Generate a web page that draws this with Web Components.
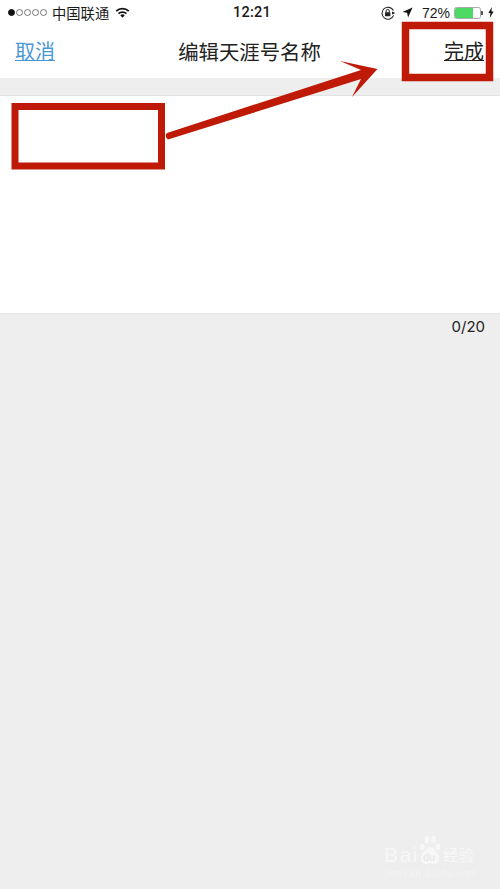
<!DOCTYPE html>
<html lang="zh">
<head>
<meta charset="utf-8">
<title>编辑天涯号名称</title>
<style>
  html, body { margin: 0; height: 100%; }
  body { width: 500px; height: 889px; overflow: hidden; background: #eee; color: #111; font-family: "Liberation Sans", "Noto Sans CJK SC", sans-serif; }
</style>
</head>
<body>
<app-page>
  <status-bar></status-bar>
  <nav-bar heading="编辑天涯号名称" cancel="取消" done="完成"></nav-bar>
  <edit-panel count="0/20"></edit-panel>
  <note-layer></note-layer>
  <baidu-mark></baidu-mark>
</app-page>
<script>
class AppPage extends HTMLElement {
  constructor() {
    super();
    this._shadowRoot = this.attachShadow({ mode: "open" });
  }
  connectedCallback() {
    this._shadowRoot.innerHTML = `
    <style>
      :host { display: flex; flex-direction: column; width: 500px; height: 889px; position: relative; overflow: hidden; }
    </style>
    <slot></slot>
    `;
  }
}

class StatusBar extends HTMLElement {
  constructor() {
    super();
    this._shadowRoot = this.attachShadow({ mode: "open" });
  }
  connectedCallback() {
    this._shadowRoot.innerHTML = `
    <style>
      :host { display: grid; grid-template-columns: 1fr auto 1fr; align-items: center; height: 25px; background: #fff; font-size: 14px; color: #1a1a1a; }
      .left { display: flex; align-items: center; padding-left: 8px; }
      .dots { display: flex; gap: 1px; margin-right: 5px; }
      .dots i { width: 7px; height: 7px; border: 1px solid #777; border-radius: 50%; box-sizing: border-box; }
      .dots i.on { background: #111; border-color: #111; }
      .carrier { font-size: 14.3px; margin-right: 6px; }
      .time { font-family: Roboto, "Liberation Sans", sans-serif; font-weight: 500; font-size: 14.5px; letter-spacing: .2px; margin-left: 4px; }
      .right { display: flex; align-items: center; justify-content: flex-end; padding-right: 6px; }
      svg { display: block; }
      .arrow { margin-left: 6px; }
      .pct { font-size: 14px; margin: 0 4px 0 9px; }
      .battery { width: 27px; height: 12px; border: 1px solid #aaa; border-radius: 2.5px; box-sizing: border-box; background: #fff; overflow: hidden; }
      .battery b { display: block; width: 72%; height: 100%; background: #4cd964; }
      .cap { width: 2px; height: 4px; background: #555; border-radius: 0 1px 1px 0; margin-right: 5px; }
    </style>
    <div class="left">
      <span class="dots"><i class="on"></i><i></i><i></i><i></i><i></i></span>
      <span class="carrier">中国联通</span>
      <svg width="15" height="11" viewBox="0 0 16 12"><path d="M0.5 3.8a11 11 0 0 1 15 0l-1.3 1.4a9 9 0 0 0-12.4 0z M3 6.500a7.400 7.400 0 0 1 10 0l-1.300 1.400a5.400 5.400 0 0 0-7.400 0z M5.600 9a3.500 3.500 0 0 1 4.800 0L8 11.600z" fill="#111"/></svg>
    </div>
    <div class="time">12:21</div>
    <div class="right">
      <svg width="15" height="14" viewBox="0 0 15 14"><path d="M12.400 4.600A6 6 0 1 0 12.600 9.400" fill="none" stroke="#222" stroke-width="1.100"/><rect x="4" y="6.300" width="5.400" height="4" rx=".6" fill="#222"/><path d="M5.100 6.500V5a1.600 1.600 0 0 1 3.200 0v1.500" fill="none" stroke="#222" stroke-width="1"/><path d="M11 5.500l3.400 1.500L11 8.500z" fill="#222"/></svg>
      <svg class="arrow" width="11" height="11" viewBox="0 0 12 12"><path d="M11.500 .5L6.600 11.500 5.600 6.400 .5 5.400z" fill="#111"/></svg>
      <span class="pct">72%</span>
      <span class="battery"><b></b></span><span class="cap"></span>
      <svg width="6" height="11" viewBox="0 0 7 13"><path d="M4.600 0L0.400 7.200h2.500L2 13l4.600-7.600H4z" fill="#111"/></svg>
    </div>
    `;
  }
}

class NavBar extends HTMLElement {
  constructor() {
    super();
    this._shadowRoot = this.attachShadow({ mode: "open" });
  }
  connectedCallback() {
    this._shadowRoot.innerHTML = `
    <style>
      :host { display: grid; grid-template-columns: 1fr auto 1fr; align-items: center; height: 53px; box-sizing: border-box; padding: 0 16px 2px 15px; background: #fff; font-size: 20px; }
      .cancel, .done { text-decoration: underline; text-decoration-thickness: 1px; text-underline-offset: 1px; text-decoration-skip-ink: none; }
      .cancel { color: #4a97d8; justify-self: start; }
      .title { color: #222; font-size: 20.4px; }
      .done { color: #222; justify-self: end; }
    </style>
    <span class="cancel">${this.getAttribute("cancel")}</span>
    <span class="title">${this.getAttribute("heading")}</span>
    <span class="done">${this.getAttribute("done")}</span>
    `;
  }
}

class EditPanel extends HTMLElement {
  constructor() {
    super();
    this._shadowRoot = this.attachShadow({ mode: "open" });
  }
  connectedCallback() {
    this._shadowRoot.innerHTML = `
    <style>
      :host { display: flex; flex-direction: column; flex: 1; background: #eee; }
      .gap { height: 17px; border-bottom: 1px solid #e2e2e2; }
      .field { height: 218px; background: #fff; border-bottom: 1px solid #e8e8e8; box-sizing: border-box; }
      .count { padding: 3px 15px 0 0; text-align: right; font-family: Inter, "Liberation Sans", sans-serif; font-size: 15px; color: #222; }
    </style>
    <div class="gap"></div>
    <div class="field"></div>
    <div class="count">${this.getAttribute("count")}</div>
    `;
  }
}

// red marks drawn over the screenshot
class NoteLayer extends HTMLElement {
  constructor() {
    super();
    this._shadowRoot = this.attachShadow({ mode: "open" });
  }
  connectedCallback() {
    this._shadowRoot.innerHTML = `
    <style>
      :host { position: absolute; inset: 0; display: block; pointer-events: none; }
      svg { display: block; }
    </style>
    <svg width="500" height="889" viewBox="0 0 500 889">
      <g fill="none" stroke="#bf1a08">
        <rect x="15" y="106.500" width="146.500" height="59.500" stroke-width="7"/>
        <rect x="405.500" y="25.500" width="84" height="52" stroke-width="7.500"/>
      </g>
      <path d="M377.500 69L340 61L361 70L167 133Q164 136 168 139.500L361 79L352 97z" fill="#bf1a08"/>
    </svg>
    `;
  }
}

class BaiduMark extends HTMLElement {
  constructor() {
    super();
    this._shadowRoot = this.attachShadow({ mode: "open" });
  }
  connectedCallback() {
    this._shadowRoot.innerHTML = `
    <style>
      :host { position: absolute; left: 384px; top: 835px; width: 100px; display: block; color: #fafafa; font-family: "Liberation Sans", "Noto Sans CJK SC", sans-serif; opacity: .8; }
      .row { display: flex; align-items: flex-end; height: 34px; }
      .bai { font-size: 21px; line-height: 18px; letter-spacing: 1.4px; margin-bottom: 5px; width: 36px; }
      .paw { position: relative; width: 20px; height: 34px; }
      .paw svg { position: absolute; left: 0; top: 0; }
      .paw span { position: absolute; left: 3px; bottom: 6px; font-size: 10px; line-height: 10px; font-weight: 700; color: #e8e8e8; }
      .jy { font-size: 15.5px; line-height: 17px; margin: 0 0 5px 3px; white-space: nowrap; }
      .url { font-size: 10px; line-height: 10px; letter-spacing: .7px; margin-left: 1px; color: #f6f6f6; white-space: nowrap; }
    </style>
    <div class="row">
      <span class="bai">Bai</span>
      <span class="paw">
        <svg width="20" height="34" viewBox="0 0 20 34" fill="#fafafa">
          <ellipse cx="2.500" cy="12" rx="2.200" ry="3.200"/><ellipse cx="7" cy="4.500" rx="2.400" ry="3.800"/><ellipse cx="13.500" cy="4.500" rx="2.400" ry="3.800"/><ellipse cx="18" cy="12" rx="2.200" ry="3.200"/>
          <path d="M10 12c3.500 0 4.500 3.500 7 6 3.500 3.500 3 11-2.500 11-1.800 0-3-.8-4.500-.8s-2.700.8-4.500.8c-5.500 0-6-7.500-2.500-11 2.500-2.500 3.500-6 7-6z"/>
        </svg>
        <span>du</span>
      </span>
      <span class="jy">经验</span>
    </div>
    <div class="url">jingyan.baidu.com</div>
    `;
  }
}

customElements.define("app-page", AppPage);
customElements.define("status-bar", StatusBar);
customElements.define("nav-bar", NavBar);
customElements.define("edit-panel", EditPanel);
customElements.define("note-layer", NoteLayer);
customElements.define("baidu-mark", BaiduMark);
</script>
</body>
</html>
